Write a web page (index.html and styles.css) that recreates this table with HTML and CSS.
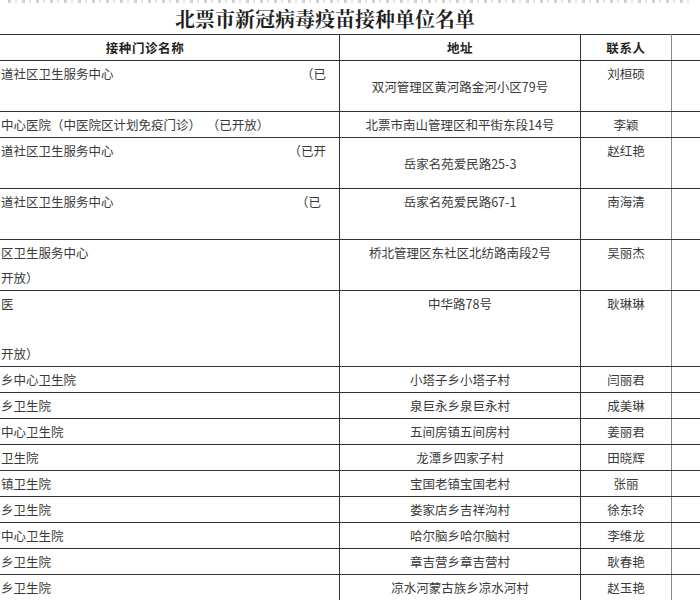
FILE: index.html
```html
<!DOCTYPE html>
<html lang="zh-CN">
<head>
<meta charset="utf-8">
<title>北票市新冠病毒疫苗接种单位名单</title>
<link rel="stylesheet" href="styles.css">
</head>
<body>
<div class="cut"></div>
<h1 class="title">北票市新冠病毒疫苗接种单位名单</h1>
<table class="list">
  <colgroup>
    <col class="c-name"><col class="c-addr"><col class="c-man"><col class="c-ext">
  </colgroup>
  <thead>
    <tr><th>接种门诊名称</th><th>地址</th><th>联系人</th><th></th></tr>
  </thead>
  <tbody>
    <tr>
      <td class="name"><div class="split"><span>道社区卫生服务中心</span><span class="tail">（已</span></div>&nbsp;</td>
      <td class="addr mid">双河管理区黄河路金河小区79号</td>
      <td class="man">刘桓硕</td><td></td>
    </tr>
    <tr>
      <td class="name">中心医院（中医院区计划免疫门诊）<span class="gap">（已开放）</span></td>
      <td class="addr">北票市南山管理区和平街东段14号</td>
      <td class="man">李颖</td><td></td>
    </tr>
    <tr>
      <td class="name"><div class="split"><span>道社区卫生服务中心</span><span class="tail">（已开</span></div>&nbsp;</td>
      <td class="addr mid">岳家名苑爱民路25-3</td>
      <td class="man">赵红艳</td><td></td>
    </tr>
    <tr>
      <td class="name"><div class="split"><span>道社区卫生服务中心</span><span class="tail t2">（已</span></div>&nbsp;</td>
      <td class="addr">岳家名苑爱民路67-1</td>
      <td class="man">南海清</td><td></td>
    </tr>
    <tr>
      <td class="name">区卫生服务中心<br>开放）</td>
      <td class="addr">桥北管理区东社区北纺路南段2号</td>
      <td class="man">吴丽杰</td><td></td>
    </tr>
    <tr>
      <td class="name">医<br>&nbsp;<br>开放）</td>
      <td class="addr">中华路78号</td>
      <td class="man">耿琳琳</td><td></td>
    </tr>
    <tr><td class="name">乡中心卫生院</td><td class="addr">小塔子乡小塔子村</td><td class="man">闫丽君</td><td></td></tr>
    <tr><td class="name">乡卫生院</td><td class="addr">泉巨永乡泉巨永村</td><td class="man">成美琳</td><td></td></tr>
    <tr><td class="name">中心卫生院</td><td class="addr">五间房镇五间房村</td><td class="man">姜丽君</td><td></td></tr>
    <tr><td class="name">卫生院</td><td class="addr">龙潭乡四家子村</td><td class="man">田晓辉</td><td></td></tr>
    <tr><td class="name">镇卫生院</td><td class="addr">宝国老镇宝国老村</td><td class="man">张丽</td><td></td></tr>
    <tr><td class="name">乡卫生院</td><td class="addr">娄家店乡吉祥沟村</td><td class="man">徐东玲</td><td></td></tr>
    <tr><td class="name">中心卫生院</td><td class="addr">哈尔脑乡哈尔脑村</td><td class="man">李维龙</td><td></td></tr>
    <tr><td class="name">乡卫生院</td><td class="addr">章吉营乡章吉营村</td><td class="man">耿春艳</td><td></td></tr>
    <tr><td class="name">乡卫生院</td><td class="addr">凉水河蒙古族乡凉水河村</td><td class="man">赵玉艳</td><td></td></tr>
  </tbody>
</table>
</body>
</html>
```
FILE: styles.css
```css
html, body {
  margin: 0;
  padding: 0;
  background: #fff;
}
body {
  width: 700px;
  height: 600px;
  overflow: hidden;
  font-family: "Noto Sans CJK SC", "Noto Sans", sans-serif;
  color: #3a3a3a;
}
.cut {
  height: 3px;
  margin: 0 8px;
  background: repeating-linear-gradient(90deg, #9a9a9a 0 3px, transparent 3px 7px, #c8c8c8 7px 9px, transparent 9px 14px);
  opacity: 0.45;
}
.title {
  margin: 0;
  height: 31px;
  padding-right: 50px;
  font-family: "Noto Serif CJK SC", "Noto Sans CJK SC", serif;
  font-size: 20px;
  line-height: 32px;
  font-weight: bold;
  text-align: center;
  color: #1f1f1f;
}
.list {
  margin-left: -50px;
  width: 790px;
  border-collapse: collapse;
  table-layout: fixed;
  font-size: 12.5px;
  line-height: 25px;
}
.c-name { width: 389px; }
.c-addr { width: 241px; }
.c-man { width: 91px; }
.c-ext { width: 69px; }
.list th, .list td {
  border: 1px solid #333;
  padding: 0;
  vertical-align: top;
  white-space: nowrap;
  overflow: hidden;
}
.list th {
  font-weight: bold;
  letter-spacing: 0.6px;
  color: #222;
  text-align: center;
}
.list th:nth-child(3), .list td:nth-child(3) {
  border-right-color: #8a8a8a;
}
.list td.name {
  padding-left: 50px;
  text-align: left;
}
.split {
  display: flex;
  justify-content: space-between;
  padding-right: 13px;
}
.split .t2 {
  margin-right: 5px;
}
.gap {
  margin-left: 12px;
}
.list td.addr {
  text-align: center;
}
.list td.mid {
  vertical-align: middle;
}
.list td.man {
  text-align: center;
}
```
